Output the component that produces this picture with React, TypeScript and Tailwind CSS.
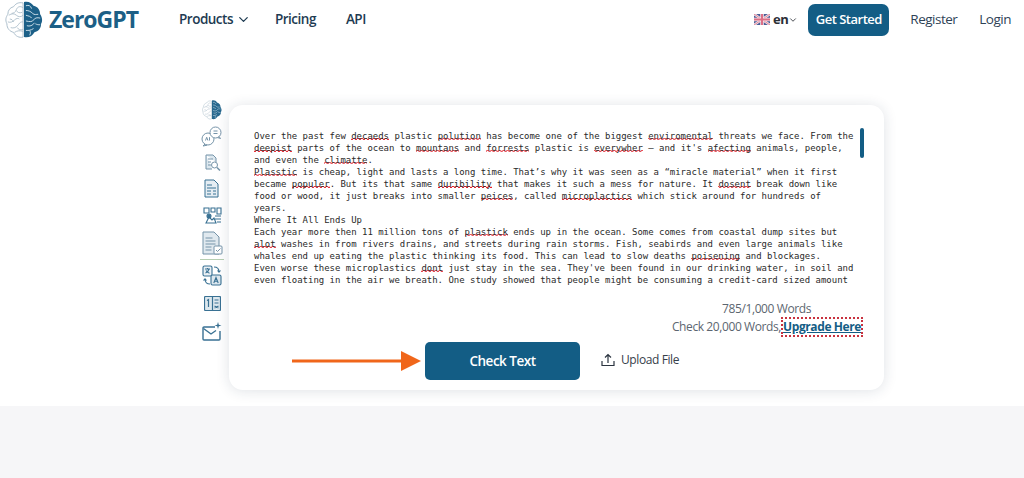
import { ChevronDown } from 'lucide-react';

const sans = "font-['Open_Sans','Noto_Sans',sans-serif]";

type Part = string | { bad: string };

const lines: Part[][] = [
  ['Over the past few ', { bad: 'decaeds' }, ' plastic ', { bad: 'polution' }, ' has become one of the biggest ', { bad: 'enviromental' }, ' threats we face. From the'],
  [{ bad: 'deepist' }, ' parts of the ocean to ', { bad: 'mountans' }, ' and ', { bad: 'forrests' }, ' plastic is ', { bad: 'everywher' }, " — and it's ", { bad: 'afecting' }, ' animals, people,'],
  ['and even the ', { bad: 'climatte' }, '.'],
  [{ bad: 'Plasstic' }, ' is cheap, light and lasts a long time. That’s why it was seen as a “miracle material” when it first'],
  ['became ', { bad: 'populer' }, '. But its that same ', { bad: 'duribility' }, ' that makes it such a mess for nature. It ', { bad: 'dosent' }, ' break down like'],
  ['food or wood, it just breaks into smaller ', { bad: 'peices' }, ', called ', { bad: 'microplactics' }, ' which stick around for hundreds of'],
  ['years.'],
  ['Where It All Ends Up'],
  ['Each year more then 11 million tons of ', { bad: 'plastick' }, ' ends up in the ocean. Some comes from coastal dump sites but'],
  [{ bad: 'alot' }, ' washes in from rivers drains, and streets during rain storms. Fish, seabirds and even large animals like'],
  ['whales end up eating the plastic thinking its food. This can lead to slow deaths ', { bad: 'poisening' }, ' and blockages.'],
  ['Even worse these microplastics ', { bad: 'dont' }, " just stay in the sea. They've been found in our drinking water, in soil and"],
  ['even floating in the air we breath. One study showed that people might be consuming a credit-card sized amount'],
];

function Brain({ size }: { size: number }) {
  return (
    <svg width={size} height={size} viewBox="0 0 40 40" fill="none">
      <path d="M19 2C14 1 11 3 9 6 5 7 3 10 3 14 1 17 0 20 2 24 2 29 5 32 9 33 11 37 15 39 19 38Z" fill="#fff" stroke="#a9bcc9" strokeWidth="1" />
      <path d="M19 7c-3-2-6-1-7 2s-3 4-5 4M4 15c3-2 6-2 8 0s5 2 7 0M3 22c3 1 5 0 7-2s4-2 5-1M6 28c3 1 6 0 8-3s3-3 5-3M12 10c1 2 3 3 6 2M10 33c3-2 6-2 9-1M5 19c2 0 3 1 4 3M13 28c1 2 3 3 6 2" stroke="#a9bcc9" strokeWidth="0.9" />
      <path d="M20 1c5-1 8 1 10 4 5 1 7 5 7 9 2 3 3 7 1 10 0 5-3 8-7 9-2 4-6 6-11 5Z" fill="#1c6088" />
      <path d="M22 5c3-1 5 0 6 3M22 10c3 0 5 1 7 3s4 1 6 1M22 15c3 1 5 1 6 3M37 18c-3-1-6 0-7 2s-4 2-8 1M23 26c3 1 6 0 8-3M37 25c-2 0-3 0-5-1M22 31c3 0 5 0 8-2M26 36c1-2 1-3 0-5" stroke="#cfe0ea" strokeWidth="1" />
    </svg>
  );
}

const stroke = '#6f8fa5';

function SideIcon({ children, className }: { children: React.ReactNode; className: string }) {
  return <div className={`flex items-center justify-center w-[29px] ${className}`}>{children}</div>;
}

function Sidebar() {
  return (
    <div className="flex flex-col w-[29px] opacity-95">
      <SideIcon className="h-[22px] pr-[5px]"><Brain size={20} /></SideIcon>
      <SideIcon className="h-[31px] pr-[6px]">
        <svg width="21" height="21" viewBox="0 0 21 21" fill="none" stroke={stroke} strokeWidth="1">
          <circle cx="7" cy="13" r="6" fill="#fff" />
          <path d="M4 18l-2 2 4-.8" />
          <circle cx="14.500" cy="6.500" r="5.500" fill="#fff" />
          <path d="M12.500 5h4M12.500 7.500h4M18 10.500l1.500 2-3-1" />
          <path d="M4.500 14.500l1.200-3.200 1.200 3.200M8.500 11.200v3.300" />
        </svg>
      </SideIcon>
      <SideIcon className="h-[22px] pr-[5px]">
        <svg width="17" height="18" viewBox="0 0 17 18" fill="none" stroke={stroke} strokeWidth="1">
          <path d="M2 1h7l3 3v4M2 1v14h6" fill="#dbe6ee" />
          <path d="M4 5h5M4 8h3M4 11h3" />
          <circle cx="10.500" cy="11" r="3" fill="#fff" />
          <path d="M13 13.500l3 3" strokeWidth="1.500" />
        </svg>
      </SideIcon>
      <SideIcon className="h-[29px] pr-[6px]">
        <svg width="15" height="19" viewBox="0 0 15 19" fill="none" stroke="#2f6a8e" strokeWidth="1">
          <path d="M1 1h9l4 4v13H1Z" fill="#e4edf3" />
          <path d="M3 6h5M3 9h9M3 12h4M9 12h3M3 15h4M9 15h3" />
        </svg>
      </SideIcon>
      <SideIcon className="h-[25px] pr-[5px]">
        <svg width="19" height="19" viewBox="0 0 19 19" fill="none" stroke="#2f6a8e" strokeWidth="1.100">
          <path d="M1 2h5v5H1ZM8 2h4v4H8ZM14 2h4v6h-4Z" />
          <path d="M3 17l3-6 3 3 2-2 2 5ZM12 10h6M12 13h6M14 16h4" />
          <circle cx="6" cy="10" r="2" fill="#2f6a8e" />
        </svg>
      </SideIcon>
      {/* active tool */}
      <div className="flex items-center justify-center w-[24px] h-[32px] pb-[1px] border-b border-[#b4cdae]">
        <svg width="21" height="25" viewBox="0 0 21 25" fill="none" stroke={stroke} strokeWidth="1">
          <path d="M1 1h11l5 5v17H1Z" fill="#dfe8ef" />
          <path d="M3.500 7h7M3.500 10h10M3.500 13h10M3.500 16h6M3.500 19h6" />
          <rect x="12" y="15" width="8" height="8" rx="1" fill="#fff" />
          <path d="M14 19l1.500 1.500 3-3" />
        </svg>
      </div>
      <SideIcon className="h-[30px] pr-[5px]">
        <svg width="20" height="21" viewBox="0 0 20 21" fill="none" stroke="#2f6a8e" strokeWidth="1.100">
          <rect x="1" y="1" width="9" height="10" rx="1.500" fill="#e8eff4" />
          <rect x="9" y="10" width="10" height="10" rx="1.500" fill="#dbe6ee" />
          <path d="M3 4h5M5.500 3v1M7 4c-.5 2-2 3.500-3.500 4M4 5.500c.8 1.200 2 2.200 3.500 2.700M11.800 18l2.200-5.500 2.200 5.500M12.600 16.200h2.800" />
          <path d="M12 2c3 0 5 1.500 5 5M15.500 5.500l1.500 1.700 1.500-1.700M8 19c-3 0-5-1.500-5-5M1.500 15.500l1.500-1.700 1.500 1.700" />
        </svg>
      </SideIcon>
      <SideIcon className="h-[26px] pr-[5px]">
        <svg width="17" height="15" viewBox="0 0 17 15" fill="none" stroke="#2f6a8e" strokeWidth="1.200">
          <rect x="0.500" y="0.500" width="16" height="14" rx="1" fill="#dce7ee" />
          <path d="M8.500 1v13M3 4.500l1.500-1V11M10.500 4h4M10.500 7h4M10.500 10l4 2M14.500 10l-4 2" />
        </svg>
      </SideIcon>
      <SideIcon className="h-[30px] pr-[5px]">
        <svg width="20" height="19" viewBox="0 0 20 19" fill="none" stroke="#2f6a8e" strokeWidth="1.400">
          <path d="M13 5H2a1 1 0 0 0-1 1v11a1 1 0 0 0 1 1h15a1 1 0 0 0 1-1V9" />
          <path d="M1.500 6.500 9 12l5-3.500" />
          <path d="M16 0l.8 2.700 2.700.8-2.700.8-.8 2.700-.8-2.700-2.700-.8 2.700-.8Z" fill="#2f6a8e" stroke="none" />
        </svg>
      </SideIcon>
    </div>
  );
}

export default function App() {
  return (
    <div className={`w-[1024px] h-[478px] overflow-hidden bg-[#f6f6f8] ${sans}`}>
      <div className="h-[406px] bg-white">
        <header className="flex items-center h-[39px] pl-[5px] pr-[13px] text-[13.500px] tracking-[-0.5px]">
          <Brain size={38} />
          <span className="ml-[6px] text-[23px] font-bold tracking-[-1px] text-[#1c5f86]">ZeroGPT</span>
          <nav className="flex items-center ml-[41px] font-semibold text-[#1e3b52]">
            <span>Products</span>
            <ChevronDown className="w-[15px] h-[15px] ml-[3px] text-[#1e3b52]" strokeWidth={2} />
            <span className="ml-[24px]">Pricing</span>
            <span className="ml-[30px]">API</span>
          </nav>
          <div className="flex items-center ml-auto">
            <svg width="16" height="11" viewBox="0 0 16 11" className="mr-[3px]">
              <rect width="16" height="11" rx="1" fill="#4a5d96" />
              <path d="M0 0l16 11M16 0 0 11" stroke="#f3e3e8" strokeWidth="2.400" />
              <path d="M0 0l16 11M16 0 0 11" stroke="#dd6f86" strokeWidth="0.800" />
              <path d="M8 0v11M0 5.500h16" stroke="#f3e3e8" strokeWidth="3.600" />
              <path d="M8 0v11M0 5.500h16" stroke="#dd6f86" strokeWidth="2" />
            </svg>
            <span className="text-[13px] font-bold text-[#2b2f36]">en</span>
            <ChevronDown className="w-[10px] h-[10px] text-[#2b2f36]" strokeWidth={2} />
            <button className="ml-[10px] h-[32px] w-[81px] rounded-[7px] bg-[#135d85] text-white font-semibold text-[13px]">Get Started</button>
            <span className="ml-[21px] text-[#2f4356]">Register</span>
            <span className="ml-[22px] text-[#2f4356]">Login</span>
          </div>
        </header>

        <main className="flex items-start pl-[200px] pt-[60px]">
          <Sidebar />
          <section className="relative w-[655px] h-[285px] mt-[6px] bg-white rounded-[14px] shadow-[0_1px_14px_rgba(30,50,80,0.14)] pt-[25px]">
            <div className="pl-[25px] font-['DejaVu_Sans_Mono',monospace] text-[8.970px] leading-[12px] text-[#2a2a2a]">
              {lines.map((line, i) => (
                <div key={i} className="whitespace-pre">
                  {line.map((part, j) =>
                    typeof part === 'string' ? (
                      <span key={j}>{part}</span>
                    ) : (
                      <span key={j} className="bg-[linear-gradient(45deg,transparent_60%,#e3202c_70%,#e3202c_78%,transparent_88%),linear-gradient(135deg,transparent_12%,#e3202c_22%,#e3202c_30%,transparent_40%)] bg-size-[4px_3px] bg-repeat-x bg-bottom">{part.bad}</span>
                    ),
                  )}
                </div>
              ))}
            </div>
            <div className="absolute right-[20px] top-[23px] w-[4px] h-[30px] rounded-full bg-[#135d85]" />

            <div className="flex flex-col items-end mt-[14px] pr-[21px] text-[12px] tracking-[-0.4px] text-[#5c6670]">
              <div className="h-[17px] leading-[17px] pr-[52px]">785/1,000 Words</div>
              <div className="flex items-center h-[20px]">
                <span>Check 20,000 Words,</span>
                <a className="flex items-center h-[20px] px-[2px] font-bold text-[#135d85] underline outline-2 outline-dotted -outline-offset-2 outline-[#c8323f]">Upgrade Here</a>
              </div>
            </div>

            <div className="flex items-center mt-[5px] pl-[63px]">
              <svg width="129" height="22" viewBox="0 0 129 22" className="mr-[4px]">
                <path d="M0 11h110" stroke="#f0661a" strokeWidth="3" />
                <path d="M109 1l20 10-20 10Z" fill="#f0661a" />
              </svg>
              <button className="w-[155px] h-[38px] rounded-[5px] bg-[#135d85] text-white text-[13.500px] font-semibold tracking-[-0.5px]">Check Text</button>
              <svg width="14" height="14" viewBox="0 0 14 14" fill="none" stroke="#2b3440" strokeWidth="1.200" className="ml-[21px] mb-[2px]">
                <path d="M1 8v4.500h12V8M7 10V1.500M4 4.500l3-3 3 3" />
              </svg>
              <span className="ml-[6px] mb-[3px] text-[12px] tracking-[-0.4px] text-[#36404a]">Upload File</span>
            </div>
          </section>
        </main>
      </div>
    </div>
  );
}
